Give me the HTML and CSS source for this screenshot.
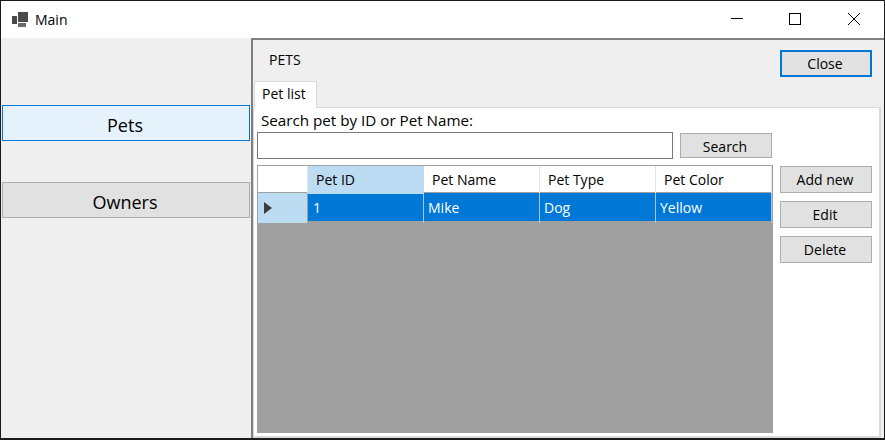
FILE: index.html
```html
<!DOCTYPE html>
<html lang="en">
<head>
  <meta charset="UTF-8">
  <title>Main</title>
  <link rel="stylesheet" href="styles.css">
</head>
<body>

  <div class="window">
    <div class="titlebar">
      <svg class="app-icon" width="16" height="16" viewBox="0 0 16 16">
        <rect x="0" y="4" width="5" height="8" fill="#4a4a4a"/>
        <rect x="6" y="0" width="10" height="10" fill="#4a4a4a"/>
        <rect x="6" y="11" width="8" height="4" fill="#6a6a6a"/>
      </svg>
      <span class="title">Main</span>
      <div class="controls">
        <div class="control">
          <svg width="12" height="12" viewBox="0 0 12 12"><path d="M0 5.5H12" stroke="#000" fill="none"/></svg>
        </div>
        <div class="control">
          <svg width="12" height="12" viewBox="0 0 12 12"><rect x="0.5" y="0.5" width="11" height="11" stroke="#000" fill="none"/></svg>
        </div>
        <div class="control">
          <svg width="12" height="12" viewBox="0 0 12 12"><path d="M0 0L12 12M12 0L0 12" stroke="#000" fill="none"/></svg>
        </div>
      </div>
    </div>

    <div class="main">
      <div class="sidebar">
        <button class="btn nav-btn nav-active">Pets</button>
        <button class="btn nav-btn">Owners</button>
      </div>

      <div class="content">
        <div class="content-head">
          <span class="heading">PETS</span>
          <button class="btn btn-close">Close</button>
        </div>

        <div class="tabs">
          <div class="tab">Pet list</div>
        </div>

        <div class="tab-page">
          <label class="search-label">Search pet by ID or Pet Name:</label>
          <div class="search-row">
            <input type="text" class="search-input">
            <button class="btn btn-search">Search</button>
          </div>

          <div class="list-row">
            <div class="grid">
              <div class="grid-row grid-head">
                <div class="cell row-head"></div>
                <div class="cell head-active">Pet ID</div>
                <div class="cell">Pet Name</div>
                <div class="cell">Pet Type</div>
                <div class="cell">Pet Color</div>
              </div>
              <div class="grid-row grid-selected">
                <div class="cell row-head">
                  <svg width="8" height="12" viewBox="0 0 8 12"><path d="M0 0L8 6L0 12Z" fill="#3c3c3c"/></svg>
                </div>
                <div class="cell cell-id">1</div>
                <div class="cell">Mike</div>
                <div class="cell">Dog</div>
                <div class="cell">Yellow</div>
              </div>
            </div>

            <div class="actions">
              <button class="btn">Add new</button>
              <button class="btn">Edit</button>
              <button class="btn">Delete</button>
            </div>
          </div>
        </div>
      </div>
    </div>
  </div>

</body>
</html>
```

FILE: styles.css
```css
html, body {
  margin: 0;
  height: 100%;
}
body {
  font-family: "Open Sans", "Noto Sans", sans-serif;
  font-size: 14px;
  color: #000;
  overflow: hidden;
}
.window {
  box-sizing: border-box;
  width: 885px;
  height: 440px;
  border: 1px solid #1a1a1a;
  border-bottom-width: 2px;
  display: flex;
  flex-direction: column;
  background: #efefef;
}

/* title bar */
.titlebar {
  height: 37px;
  flex: none;
  display: flex;
  align-items: center;
  background: #fff;
}
.app-icon {
  margin-left: 11px;
}
.title {
  margin-left: 7px;
}
.controls {
  margin-left: auto;
  display: flex;
}
.control {
  width: 58px;
  height: 37px;
  box-sizing: border-box;
  padding-top: 12px;
  display: flex;
  align-items: flex-start;
  justify-content: center;
}
.control:last-child {
  width: 60px;
}

/* buttons */
.btn {
  box-sizing: border-box;
  width: 92px;
  height: 27px;
  padding: 0 2px 0 0;
  border: 1px solid #adadad;
  background: #e1e1e1;
  font-family: inherit;
  font-size: 14px;
  color: #000;
}

.main {
  flex: 1;
  display: flex;
  min-height: 0;
}

/* left menu */
.sidebar {
  width: 250px;
  flex: none;
  display: flex;
  flex-direction: column;
  gap: 41px;
  padding: 67px 1px 0 1px;
  box-sizing: border-box;
}
.nav-btn {
  width: 248px;
  height: 36px;
  padding-top: 4px;
  font-size: 18px;
}
.nav-active {
  background: #e5f1fb;
  border-color: #0078d7;
}

/* right panel */
.content {
  flex: 1;
  border-left: 2px solid #808080;
  border-top: 2px solid #808080;
  display: flex;
  flex-direction: column;
  min-width: 0;
}
.content-head {
  height: 40px;
  flex: none;
  display: flex;
  justify-content: space-between;
  padding: 10px 12px 0 16px;
  box-sizing: border-box;
}
.heading {
  line-height: 20px;
}
.btn-close {
  border: 2px solid #0078d7;
}
.tabs {
  height: 27px;
  flex: none;
  display: flex;
  align-items: flex-end;
  padding-left: 1px;
}
.tab {
  width: 63px;
  height: 27px;
  box-sizing: border-box;
  background: #fff;
  border: 1px solid #d9d9d9;
  border-bottom: none;
  padding-left: 7px;
  line-height: 24px;
  margin-bottom: -1px;
  position: relative;
  z-index: 1;
}
.tab-page {
  flex: 1;
  margin-right: 3px;
  background: #fff;
  border: 1px solid #d9d9d9;
  border-width: 1px 2px 2px 1px;
  padding: 3px 0 3px 3px;
  display: flex;
  flex-direction: column;
  min-height: 0;
}
.search-label {
  height: 21px;
  line-height: 19px;
  padding-left: 4px;
  font-size: 15.2px;
  flex: none;
}
.search-row {
  height: 27px;
  flex: none;
  display: flex;
  align-items: center;
  gap: 7px;
}
.search-input {
  box-sizing: border-box;
  width: 416px;
  height: 27px;
  border: 1px solid #7a7a7a;
  padding: 0;
  margin: 0;
}
.btn-search {
  height: 25px;
  padding-top: 2px;
}
.list-row {
  flex: 1;
  display: flex;
  margin-top: 6px;
  gap: 7px;
  min-height: 0;
}

/* data grid */
.grid {
  width: 516px;
  flex: none;
  box-sizing: border-box;
  background: #a0a0a0;
  border-top: 1px solid #a0a0a0;
  border-left: 1px solid #a0a0a0;
  border-right: 1px solid #a0a0a0;
}
.grid-row {
  display: grid;
  grid-template-columns: 50px 116px 116px 116px 116px;
}
.grid-head {
  height: 27px;
  background: #fff;
  border-bottom: 1px solid #a0a0a0;
  box-sizing: border-box;
}
.grid-head .cell {
  padding-left: 8px;
  line-height: 28px;
  border-right: 1px solid #e3e3e3;
}
.grid-head .head-active {
  background: #bcdcf4;
  border-right-color: #bcdcf4;
}
.grid-selected {
  height: 28px;
  box-sizing: border-box;
  background: #0078d7;
  color: #fff;
}
.grid-selected .cell {
  padding-left: 4px;
  line-height: 30px;
  border-right: 1px solid #a0c8e8;
}
.grid-selected .cell-id {
  padding-left: 5px;
}
.grid-selected .row-head {
  background: #bcdcf4;
  display: flex;
  align-items: center;
  padding-left: 6px;
  border-right-color: #a0a0a0;
}

/* side buttons */
.actions {
  margin-top: 1px;
  display: flex;
  flex-direction: column;
  gap: 8px;
}
```
